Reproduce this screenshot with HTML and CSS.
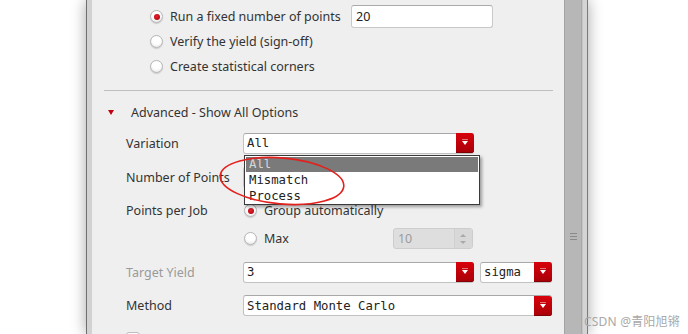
FILE: index.html
```html
<!DOCTYPE html>
<html>
<head>
<meta charset="utf-8">
<link rel="stylesheet" href="styles.css">
</head>
<body>
<div class="desk">
  <div class="window">
    <div class="frame"></div>
    <div class="panel">
      <div class="choices">
        <div class="choice">
          <span class="radio on"></span><span class="choice-label wide">Run a fixed number of points</span>
          <span class="field points">20</span>
        </div>
        <div class="choice"><span class="radio"></span><span class="choice-label">Verify the yield (sign-off)</span></div>
        <div class="choice"><span class="radio"></span><span class="choice-label">Create statistical corners</span></div>
      </div>
      <div class="sep"></div>
      <div class="adv"><span class="tri"></span><span>Advanced - Show All Options</span></div>
      <div class="form">
        <div class="row r-var">
          <span class="lbl">Variation</span>
          <div class="combo w231"><span class="val">All</span><span class="btn"></span></div>
        </div>
        <div class="row r-nop">
          <span class="lbl">Number of Points</span>
          <div class="field w231"></div>
        </div>
        <div class="row r-ppj">
          <span class="lbl">Points per Job</span>
          <div class="opt"><span class="radio on"></span><span>Group automatically</span></div>
        </div>
        <div class="row r-max">
          <span class="lbl"></span>
          <div class="opt grow"><span class="radio"></span><span>Max</span>
            <div class="spin"><span class="spin-val">10</span><span class="spin-btns"><span class="up"></span><span class="down"></span></span></div>
          </div>
        </div>
        <div class="row r-ty">
          <span class="lbl dim">Target Yield</span>
          <div class="combo w231"><span class="val">3</span><span class="btn"></span></div>
          <div class="combo w72"><span class="val">sigma</span><span class="btn"></span></div>
        </div>
        <div class="row r-met">
          <span class="lbl">Method</span>
          <div class="combo w309"><span class="val">Standard Monte Carlo</span><span class="btn"></span></div>
        </div>
        <div class="row r-chk">
          <span class="check"></span>
        </div>
      </div>
      <div class="popup">
        <div class="item sel">All</div>
        <div class="item">Mismatch</div>
        <div class="item">Process</div>
      </div>
      <svg class="mark" width="140" height="60" viewBox="0 0 140 60"><ellipse cx="64" cy="27" rx="62" ry="23" transform="rotate(5 64 27)" fill="none" stroke="#e3201b" stroke-width="1.6"/></svg>
    </div>
    <div class="scroll"><span class="grip"></span></div>
    <div class="frame fr-r"></div>
  </div>
</div>
<div class="wm">CSDN @青阳旭锵</div>
</body>
</html>
```

FILE: styles.css
```css
html, body { margin: 0; padding: 0; background: #fff; }
body { width: 688px; height: 334px; overflow: hidden; position: relative;
  font-family: "Noto Sans", "Open Sans", sans-serif; font-size: 12.5px; color: #333; }
.desk { padding-left: 86px; height: 334px; overflow: hidden; }
.window { width: 502px; height: 334px; display: flex; box-sizing: border-box; overflow: hidden;
  border-left: 1px solid #6f6f6f; border-right: 1px solid #7a7a7a;
  box-shadow: 0 0 14px rgba(0,0,0,0.35); background: #efefef; }
.frame { width: 5px; background: #d2d2d2; }
.fr-r { background: #d4d4d4; border-left: 1px solid #c4c4c4; width: 4px; }
.panel { width: 472px; box-sizing: border-box; padding: 0 11px 0 12px; background: #efefef; position: relative; overflow: hidden; }
.scroll { width: 18px; box-sizing: border-box; background: #b7b7b7; border-left: 1px solid #a3a3a3; border-right: 1px solid #a9a9a9; position: relative; }
.grip { position: absolute; left: 5px; top: 233px; width: 7px; height: 7px;
  background: repeating-linear-gradient(#8a8a8a 0 1px, transparent 1px 3px); }

.choices { padding-top: 4px; padding-left: 46px; }
.choice { height: 25px; display: flex; align-items: center; }
.choice-label { margin-left: 7px; }
.choice-label.wide { width: 181px; }
.radio { width: 13px; height: 13px; border-radius: 50%; box-sizing: border-box; flex: none;
  background: radial-gradient(circle at 50% 35%, #ffffff 0 45%, #dcdcdc 100%);
  border: 1px solid #b5b5b5; box-shadow: 0 1px 1px rgba(0,0,0,0.15); position: relative; }
.radio.on::after { content: ""; position: absolute; left: 2.5px; top: 2.5px; width: 6px; height: 6px;
  border-radius: 50%; background: radial-gradient(circle at 45% 40%, #e8222a, #a0000c); }
.field { display: inline-block; height: 23px; box-sizing: border-box; background: #fff;
  border: 1px solid #c9c9c9; border-top-color: #aaa; border-radius: 3px; }
.field.points { width: 142px; padding: 2px 4px; line-height: 17px; font-size: 12.5px; color: #222; }

.sep { margin-top: 11px; height: 1px; background: #bfbfbf; }
.adv { height: 22px; margin-top: 10px; display: flex; align-items: center; }
.tri { width: 0; height: 0; border-left: 3.5px solid transparent; border-right: 3.5px solid transparent;
  border-top: 5px solid #c40010; margin-left: 4px; margin-right: 17px; }

.form { padding-left: 22px; margin-top: 3px; }
.row { display: flex; align-items: center; }
.lbl { width: 117px; flex: none; }
.lbl.dim { color: #9a9a9a; }
.r-var, .r-nop { height: 34px; }
.r-ppj { height: 33px; }
.r-max { height: 23px; }
.r-ty { height: 34px; margin-top: 5px; }
.r-met { height: 33px; }
.r-chk { height: 12px; align-items: flex-start; }

.combo { height: 21px; box-sizing: border-box; background: #fff; border: 1px solid #c2c2c2; border-top-color: #a8a8a8;
  border-radius: 3px; display: flex; align-items: center; justify-content: space-between;
  font-family: "DejaVu Sans Mono", monospace; font-size: 12.3px; color: #222; }
.field.w231 { width: 231px; height: 21px; }
.w231 { width: 231px; }
.w72 { width: 72px; margin-left: 6px; }
.w309 { width: 309px; }
.val { padding-left: 3px; }
.btn { width: 18px; height: 20px; margin: -1px -1px -1px 0; border-radius: 0 3px 3px 0; position: relative;
  background: linear-gradient(#d8000c, #a80008); box-shadow: inset 0 -1px 0 #800006; }
.btn::after { content: ""; position: absolute; left: 6px; top: 8px; border-left: 3px solid transparent; border-right: 3px solid transparent;
  border-top: 4px solid #fff; }
.btn::before { content: ""; position: absolute; left: 6px; top: 6px; width: 6px; height: 1px; background: rgba(255,255,255,0.45); }

.opt { display: flex; align-items: center; gap: 7px; margin-left: 1px; }
.opt.grow { flex: 1; }
.spin { margin-left: 97px; width: 80px; height: 21px; box-sizing: border-box; background: #dedede; border: 1px solid #cdcdcd;
  border-radius: 3px; display: flex; align-items: center; justify-content: space-between; color: #9c9c9c; }
.spin-val { padding-left: 4px; }
.spin-btns { width: 17px; height: 19px; border-left: 1px solid #d0d0d0; background: #d8d8d8; display: flex; flex-direction: column;
  align-items: center; justify-content: center; gap: 4px; }
.up { border-left: 3px solid transparent; border-right: 3px solid transparent; border-bottom: 3px solid #a9a9a9; }
.down { border-left: 3px solid transparent; border-right: 3px solid transparent; border-top: 3px solid #a9a9a9; }

.check { width: 14px; height: 14px; box-sizing: border-box; border: 1px solid #bdbdbd; border-radius: 3px; background: #fdfdfd; margin-top: 10px; }

.popup { position: absolute; left: 152px; top: 155px; width: 236px; height: 50px; box-sizing: border-box;
  background: #fff; border: 1px solid #3a3a3a; box-shadow: 2px 2px 3px rgba(0,0,0,0.35);
  padding: 1px 1px; font-family: "DejaVu Sans Mono", monospace; font-size: 12.3px; color: #222; }
.item { height: 16px; line-height: 16px; padding-left: 3px; }
.item.sel { background: #7a7a7a; color: #d6d6d6; height: 15px; line-height: 15px; }
.mark { position: absolute; left: 126px; top: 154px; }

.wm { position: absolute; left: 584px; top: 312px; font-family: "Noto Sans", "Noto Sans CJK SC", sans-serif; font-size: 12px;
  color: #a8a8a8; letter-spacing: 0.2px; }
```
